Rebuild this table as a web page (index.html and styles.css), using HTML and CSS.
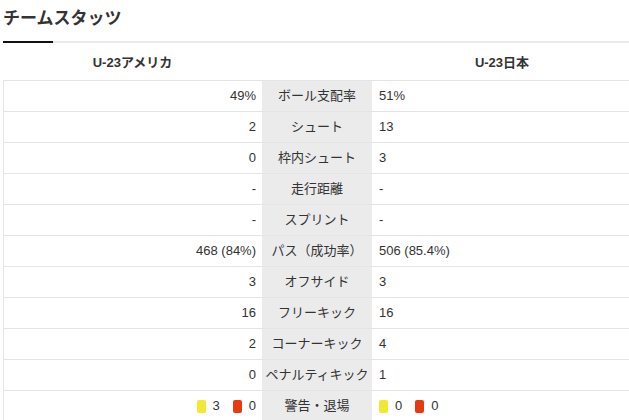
FILE: index.html
```html
<!DOCTYPE html>
<html lang="ja">
<head>
<meta charset="utf-8">
<title>チームスタッツ</title>
<link rel="stylesheet" href="styles.css">
</head>
<body>
<div class="page">
  <h2 class="title">チームスタッツ</h2>
  <div class="tabline"><div class="tab-active"></div></div>
  <div class="teams">
    <div class="team">U-23アメリカ</div>
    <div class="team-gap"></div>
    <div class="team">U-23日本</div>
  </div>
  <div class="stats">
    <div class="row"><div class="home">49%</div><div class="label">ボール支配率</div><div class="away">51%</div></div>
    <div class="row"><div class="home">2</div><div class="label">シュート</div><div class="away">13</div></div>
    <div class="row"><div class="home">0</div><div class="label">枠内シュート</div><div class="away">3</div></div>
    <div class="row"><div class="home">-</div><div class="label">走行距離</div><div class="away">-</div></div>
    <div class="row"><div class="home">-</div><div class="label">スプリント</div><div class="away">-</div></div>
    <div class="row"><div class="home">468 (84%)</div><div class="label">パス（成功率）</div><div class="away">506 (85.4%)</div></div>
    <div class="row"><div class="home">3</div><div class="label">オフサイド</div><div class="away">3</div></div>
    <div class="row"><div class="home">16</div><div class="label">フリーキック</div><div class="away">16</div></div>
    <div class="row"><div class="home">2</div><div class="label">コーナーキック</div><div class="away">4</div></div>
    <div class="row"><div class="home">0</div><div class="label">ペナルティキック</div><div class="away">1</div></div>
    <div class="row">
      <div class="home"><span class="card yellow"></span><span class="num">3</span><span class="card red"></span><span class="num">0</span></div>
      <div class="label">警告・退場</div>
      <div class="away"><span class="card yellow"></span><span class="num">0</span><span class="card red"></span><span class="num">0</span></div>
    </div>
  </div>
</div>
</body>
</html>
```

FILE: styles.css
```css
html, body {
  margin: 0;
  padding: 0;
  background: #fff;
  overflow: hidden;
}
body {
  font-family: "Liberation Sans", Arial, "Noto Sans CJK JP", sans-serif;
  color: #333;
  font-size: 13px;
}
.page {
  padding-left: 3px;
  width: 629px;
}
.title {
  margin: 0;
  font-size: 17px;
  line-height: 24px;
  font-weight: bold;
  padding: 7px 0 10px;
  color: #333;
}
.tabline {
  height: 2px;
  background: #ebebeb;
  display: flex;
}
.tab-active {
  width: 50px;
  background: #111;
}
.teams {
  display: grid;
  grid-template-columns: 259px 110px 1fr;
  height: 37px;
  align-items: center;
  font-weight: bold;
  font-size: 13px;
}
.team {
  text-align: center;
  color: #333;
}
.stats {
  border-left: 1px solid #e4e4e4;
}
.row {
  display: grid;
  grid-template-columns: 258px 110px 1fr;
  height: 30px;
  border-top: 1px solid #e4e4e4;
}
.home, .label, .away {
  display: flex;
  align-items: center;
  line-height: 30px;
}
.home {
  justify-content: flex-end;
  padding-right: 6px;
}
.label {
  background: #ebebeb;
  justify-content: center;
}
.away {
  padding-left: 7px;
}
.card {
  display: inline-block;
  width: 9px;
  height: 13px;
  border-radius: 2px;
}
.yellow { background: #f1e830; }
.red { background: #e83a10; }
.num {
  margin-left: 7px;
  margin-right: 13px;
}
.num:last-child { margin-right: 0; }
```
